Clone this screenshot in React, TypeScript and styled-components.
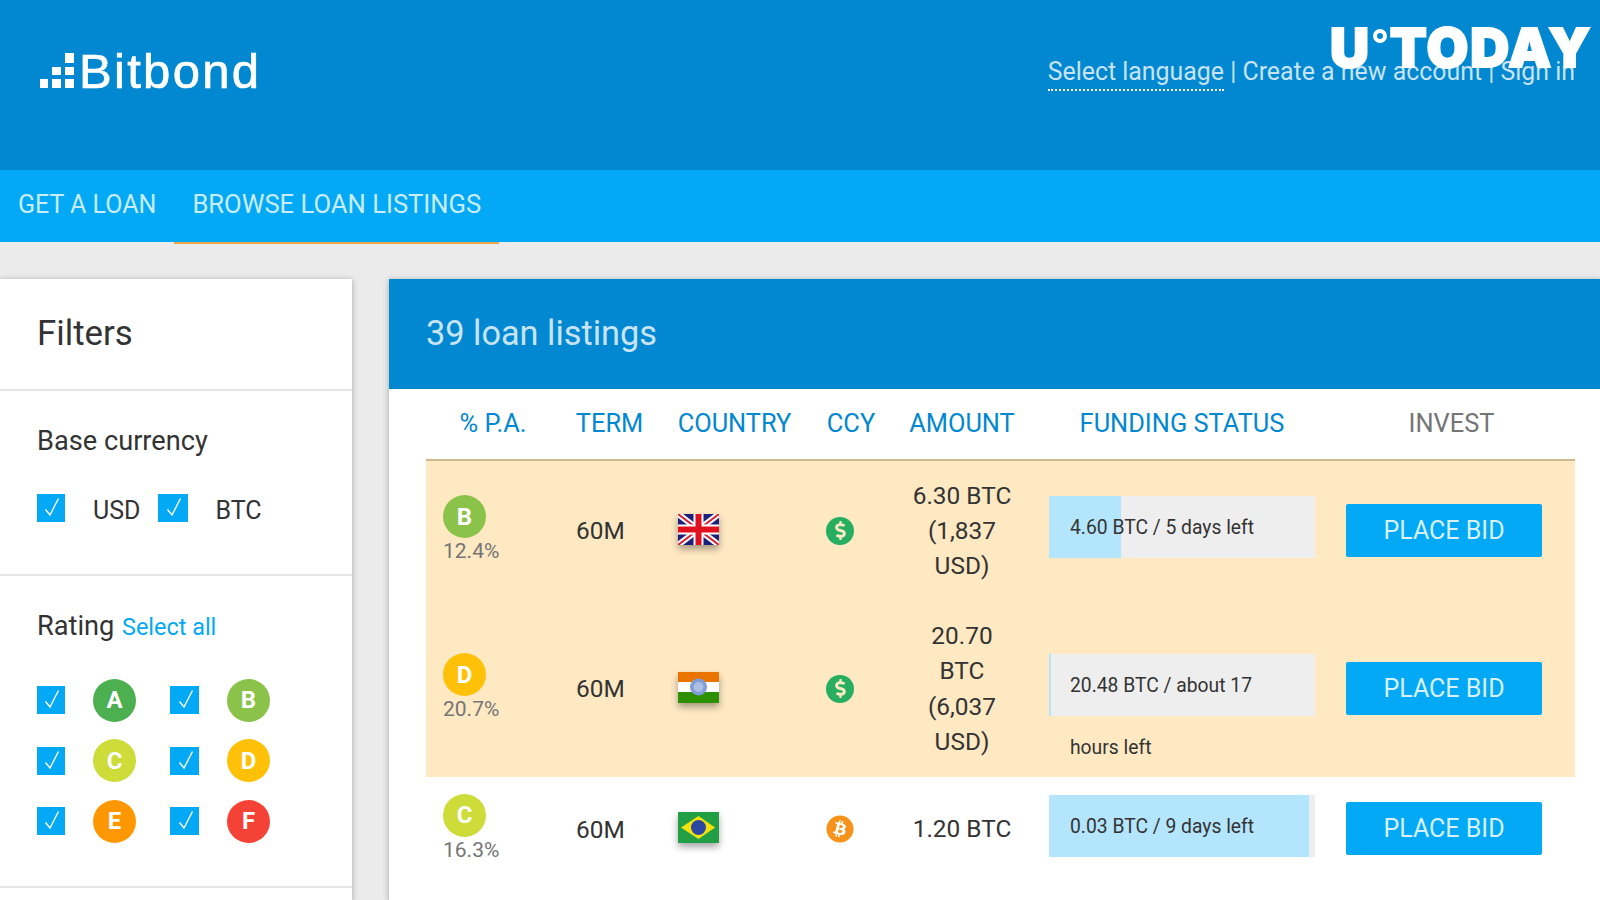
import * as React from 'react';
import styled, { createGlobalStyle } from 'styled-components';
import { FaBitcoin, FaDollarSign } from 'react-icons/fa';

const GlobalStyle = createGlobalStyle`
    html, body {
        margin: 0;
        height: 100%;
        overflow: hidden;
        background: #ebebeb;
        font-family: Roboto, "Liberation Sans", sans-serif;
    }
    * {
        box-sizing: border-box;
    }
`;

const Page = styled.div`
    height: 900px;
    display: flex;
    flex-direction: column;
    overflow: hidden;
`;

const Header = styled.header`
    position: relative;
    height: 170px;
    flex: none;
    background: #0288d1;
    display: flex;
    justify-content: space-between;
    align-items: flex-start;
    padding: 45px 25px 0 40px;
`;

const Logo = styled.div`
    display: flex;
    align-items: flex-end;
    gap: 3px;
`;
const LogoText = styled.span`
    font-family: "Liberation Sans", sans-serif;
    font-size: 49px;
    line-height: 52px;
    letter-spacing: 2.3px;
    -webkit-text-stroke: 0.7px #fff;
    color: #fff;
`;
const LogoMark = styled.svg`
    width: 36px;
    height: 36px;
    margin-bottom: 8px;
`;

const Links = styled.div`
    font-size: 24.9px;
    line-height: 54px;
    color: rgba(255, 255, 255, 0.78);
    white-space: nowrap;
`;
const LanguageLink = styled.span`
    border-bottom: 2px dotted #fff;
    padding-bottom: 3px;
`;

const Watermark = styled.div`
    position: absolute;
    top: 19px;
    left: 1330px;
    display: flex;
    align-items: flex-start;
    font-family: Inter, "Liberation Sans", sans-serif;
    font-weight: 900;
    font-size: 54px;
    line-height: 58px;
    letter-spacing: 1.7px;
    -webkit-text-stroke: 2px #fff;
    color: #fff;
`;
const WatermarkRing = styled.span`
    width: 14px;
    height: 14px;
    margin: 10px 3px 0 2px;
    border: 4px solid #fff;
    border-radius: 50%;
`;

const Nav = styled.nav`
    height: 72px;
    flex: none;
    display: flex;
    background: #03a9f4;
`;
const NavTab = styled.div<{ $active?: boolean }>`
    height: ${(props) => (props.$active ? '74px' : '72px')};
    padding: 0 18px;
    font-size: ${(props) => (props.$active ? '25.6px' : '25px')};
    line-height: 69px;
    color: rgba(255, 255, 255, 0.8);
    border-bottom: ${(props) => (props.$active ? '2px solid #f0a44a' : 'none')};
    position: relative;
`;

const Content = styled.div`
    flex: 1;
    display: flex;
    gap: 37px;
    padding-top: 37px;
    min-height: 0;
`;

const Sidebar = styled.aside`
    width: 352px;
    flex: none;
    background: #fff;
    box-shadow: 0 1px 6px rgba(0, 0, 0, 0.3);
`;
const SideTitle = styled.div`
    height: 112px;
    padding: 0 37px;
    font-size: 34.8px;
    line-height: 108px;
    color: #333;
    border-bottom: 2px solid #e4e4e4;
`;
const SideSection = styled.section<{ $height: number }>`
    height: ${(props) => props.$height}px;
    padding: 33px 37px 0;
    border-bottom: 2px solid #e4e4e4;
`;
const SectionLabel = styled.div`
    font-size: 27.2px;
    line-height: 34px;
    color: #333;
`;
const SelectAll = styled.span`
    margin-left: 1px;
    font-size: 23.4px;
    color: #03a9f4;
`;

const CurrencyRow = styled.div`
    display: flex;
    align-items: flex-start;
    margin-top: 36px;
`;
const CurrencyLabel = styled.span<{ $gap: number }>`
    margin: 3px ${(props) => props.$gap}px 0 ${(props) => (props.$gap ? 28 : 27)}px;
    font-size: 25px;
    line-height: 28px;
    color: #333;
`;

const CheckBox = styled.span<{ $width?: number }>`
    width: ${(props) => props.$width || 28}px;
    height: 28px;
    background: #03a9f4;
    display: flex;
    align-items: center;
    justify-content: center;
`;
const CheckMark = styled.svg`
    width: 28px;
    height: 28px;
`;

const RatingGrid = styled.div`
    display: grid;
    grid-template-columns: 56px 77px 57px 43px;
    grid-auto-rows: 42px;
    row-gap: 18.7px;
    align-items: center;
    margin-top: 35px;
`;

const Grade = styled.span<{ $color: string }>`
    width: 43px;
    height: 43px;
    border-radius: 50%;
    background: ${(props) => props.$color};
    color: #fff;
    font-size: 24px;
    font-weight: 700;
    display: flex;
    align-items: center;
    justify-content: center;
`;

const Main = styled.main`
    flex: 1;
    background: #fff;
    box-shadow: 0 1px 6px rgba(0, 0, 0, 0.3);
`;
const MainHeader = styled.div`
    height: 110px;
    padding: 0 37px;
    background: #0288d1;
    color: rgba(255, 255, 255, 0.8);
    font-size: 34.3px;
    line-height: 108px;
`;
const Table = styled.div`
    margin: 0 25px 0 37px;
`;
const columns = '134px 99px 151px 82px 140px 300px 1fr';
const HeadRow = styled.div`
    display: grid;
    grid-template-columns: ${columns};
    height: 72px;
    align-items: center;
    border-bottom: 2px solid #cdb98f;
`;
const HeadCell = styled.div<{ $muted?: boolean }>`
    font-size: 25.4px;
    text-align: center;
    color: ${(props) => (props.$muted ? '#757575' : '#0288d1')};
    padding: 0 ${(props) => (props.$muted ? '4px' : '0')} 2px 0;
    white-space: nowrap;
`;
const LoanRow = styled.div<{ $open?: boolean; $height: number }>`
    display: grid;
    grid-template-columns: ${columns};
    height: ${(props) => props.$height}px;
    align-items: center;
    background: ${(props) => (props.$open ? '#fee9c3' : '#fff')};
    font-size: 24.4px;
    color: #333;
`;
const RateCell = styled.div`
    padding-left: 17px;
    margin-bottom: 5px;
    height: 66px;
`;
const Rate = styled.div`
    margin-top: 1px;
    font-size: 21px;
    line-height: 24px;
    color: #757575;
`;
const TermCell = styled.div`
    padding-left: 16px;
`;
const FlagCell = styled.div`
    padding-left: 19px;
    display: flex;
    margin-bottom: 3px;
`;
const Flag = styled.svg`
    width: 41px;
    height: 31px;
    box-shadow: 0 4px 7px rgba(0, 0, 0, 0.35);
`;
const CoinCell = styled.div`
    padding-left: 16px;
    display: flex;
`;
const Coin = styled.span`
    width: 28px;
    height: 28px;
    border-radius: 50%;
    background: #27ae60;
    color: #fee9c3;
    display: flex;
    align-items: center;
    justify-content: center;
`;
const AmountCell = styled.div`
    padding: 0 17px;
    text-align: center;
    line-height: 35.3px;
`;
const FundingCell = styled.div`
    padding: 0 17px;
    margin-bottom: 7px;
`;
const Bar = styled.div`
    position: relative;
    height: 62px;
    background: #eee;
`;
const BarFill = styled.div`
    position: absolute;
    top: 0;
    left: 0;
    bottom: 0;
    background: #b3e5fc;
`;
const BarText = styled.div`
    position: relative;
    padding: 1px 0 0 21px;
    font-size: 19.3px;
    line-height: 62px;
    color: #333;
    width: 240px;
`;
const BidCell = styled.div`
    padding: 0 0 1px 14px;
`;
const BidButton = styled.div`
    width: 196px;
    height: 53px;
    border-radius: 2px;
    background: #03a9f4;
    color: rgba(255, 255, 255, 0.85);
    font-size: 25px;
    line-height: 53px;
    text-align: center;
`;

const Check = () => (
    <CheckMark viewBox="0 0 28 28">
        <path d="M8.5 15.5 L13 21 L21.5 4.5" fill="none" stroke="#fff" strokeWidth="1.4" />
    </CheckMark>
);

const UkFlag = () => (
    <Flag viewBox="0 0 41 31">
        <rect width="41" height="31" fill="#1d1f78" />
        <path d="M0 0 L41 31 M41 0 L0 31" stroke="#fff" strokeWidth="6" />
        <path d="M0 0 L41 31 M41 0 L0 31" stroke="#d8203a" strokeWidth="2" />
        <path d="M20.5 0 V31 M0 15.5 H41" stroke="#fff" strokeWidth="10" />
        <path d="M20.5 0 V31 M0 15.5 H41" stroke="#e0101f" strokeWidth="6" />
    </Flag>
);

const IndiaFlag = () => (
    <Flag viewBox="0 0 41 31">
        <rect width="41" height="11" fill="#e97400" />
        <rect y="10" width="41" height="11" fill="#fff" />
        <rect y="20" width="41" height="11" fill="#2c9000" />
        <circle cx="20.5" cy="15" r="8.5" fill="#7f9dd8" />
        <circle cx="20.5" cy="15" r="5" fill="#aebfe4" />
    </Flag>
);

const BrazilFlag = () => (
    <Flag viewBox="0 0 41 31">
        <rect width="41" height="31" fill="#229e45" />
        <path d="M20.5 4 L37 15.5 L20.5 27 L3 15.5 Z" fill="#f4e20c" />
        <circle cx="20.5" cy="15.5" r="7.5" fill="#2b49a3" />
    </Flag>
);

const DollarCoin = () => (
    <Coin>
        <FaDollarSign size={19} />
    </Coin>
);

const loans = [
    { grade: 'B', color: '#8bc34a', rate: '12.4%', flag: <UkFlag />, coin: <DollarCoin />, amount: '6.30 BTC (1,837 USD)', funded: 72, status: '4.60 BTC / 5 days left', height: 139, open: true },
    { grade: 'D', color: '#ffc107', rate: '20.7%', flag: <IndiaFlag />, coin: <DollarCoin />, amount: '20.70 BTC (6,037 USD)', funded: 2, status: '20.48 BTC / about 17 hours left', height: 177, open: true },
    { grade: 'C', color: '#cddc39', rate: '16.3%', flag: <BrazilFlag />, coin: <FaBitcoin size={28} color="#f7931a" />, amount: '1.20 BTC', funded: 260, status: '0.03 BTC / 9 days left', height: 104, open: false },
];

const ratings = [
    { grade: 'A', color: '#4caf50' },
    { grade: 'B', color: '#8bc34a' },
    { grade: 'C', color: '#cddc39' },
    { grade: 'D', color: '#ffc107' },
    { grade: 'E', color: '#ff9800' },
    { grade: 'F', color: '#f44336' },
];

export default function App() {
    return (
        <Page>
            <GlobalStyle />
            <Header>
                <Logo>
                    <LogoMark viewBox="0 0 36 36">
                        <rect x="0" y="26" width="8" height="9" fill="#fff" />
                        <rect x="12" y="26" width="9" height="9" fill="#fff" />
                        <rect x="25" y="26" width="9" height="9" fill="#fff" />
                        <rect x="12" y="14" width="9" height="8" fill="#fff" />
                        <rect x="25" y="14" width="9" height="8" fill="#fff" />
                        <rect x="25" y="0" width="9" height="10" fill="#fff" />
                    </LogoMark>
                    <LogoText>Bitbond</LogoText>
                </Logo>
                <Links>
                    <LanguageLink>Select language</LanguageLink> | Create a new account | Sign in
                </Links>
                <Watermark>
                    U<WatermarkRing />TODAY
                </Watermark>
            </Header>
            <Nav>
                <NavTab>GET A LOAN</NavTab>
                <NavTab $active>BROWSE LOAN LISTINGS</NavTab>
            </Nav>
            <Content>
                <Sidebar>
                    <SideTitle>Filters</SideTitle>
                    <SideSection $height={185}>
                        <SectionLabel>Base currency</SectionLabel>
                        <CurrencyRow>
                            <CheckBox><Check /></CheckBox>
                            <CurrencyLabel $gap={18}>USD</CurrencyLabel>
                            <CheckBox $width={30}><Check /></CheckBox>
                            <CurrencyLabel $gap={0}>BTC</CurrencyLabel>
                        </CurrencyRow>
                    </SideSection>
                    <SideSection $height={312}>
                        <SectionLabel>
                            Rating <SelectAll>Select all</SelectAll>
                        </SectionLabel>
                        <RatingGrid>
                            {ratings.map((item) => (
                                <React.Fragment key={item.grade}>
                                    <CheckBox $width={'ACE'.includes(item.grade) ? 28 : 29}><Check /></CheckBox>
                                    <Grade $color={item.color}>{item.grade}</Grade>
                                </React.Fragment>
                            ))}
                        </RatingGrid>
                    </SideSection>
                </Sidebar>
                <Main>
                    <MainHeader>39 loan listings</MainHeader>
                    <Table>
                        <HeadRow>
                            <HeadCell>% P.A.</HeadCell>
                            <HeadCell>TERM</HeadCell>
                            <HeadCell>COUNTRY</HeadCell>
                            <HeadCell>CCY</HeadCell>
                            <HeadCell>AMOUNT</HeadCell>
                            <HeadCell>FUNDING STATUS</HeadCell>
                            <HeadCell $muted>INVEST</HeadCell>
                        </HeadRow>
                        {loans.map((loan) => (
                            <LoanRow key={loan.rate} $open={loan.open} $height={loan.height}>
                                <RateCell>
                                    <Grade $color={loan.color}>{loan.grade}</Grade>
                                    <Rate>{loan.rate}</Rate>
                                </RateCell>
                                <TermCell>60M</TermCell>
                                <FlagCell>{loan.flag}</FlagCell>
                                <CoinCell>{loan.coin}</CoinCell>
                                <AmountCell>{loan.amount}</AmountCell>
                                <FundingCell>
                                    <Bar>
                                        <BarFill style={{ width: loan.funded }} />
                                        <BarText>{loan.status}</BarText>
                                    </Bar>
                                </FundingCell>
                                <BidCell>
                                    <BidButton>PLACE BID</BidButton>
                                </BidCell>
                            </LoanRow>
                        ))}
                    </Table>
                </Main>
            </Content>
        </Page>
    );
}
